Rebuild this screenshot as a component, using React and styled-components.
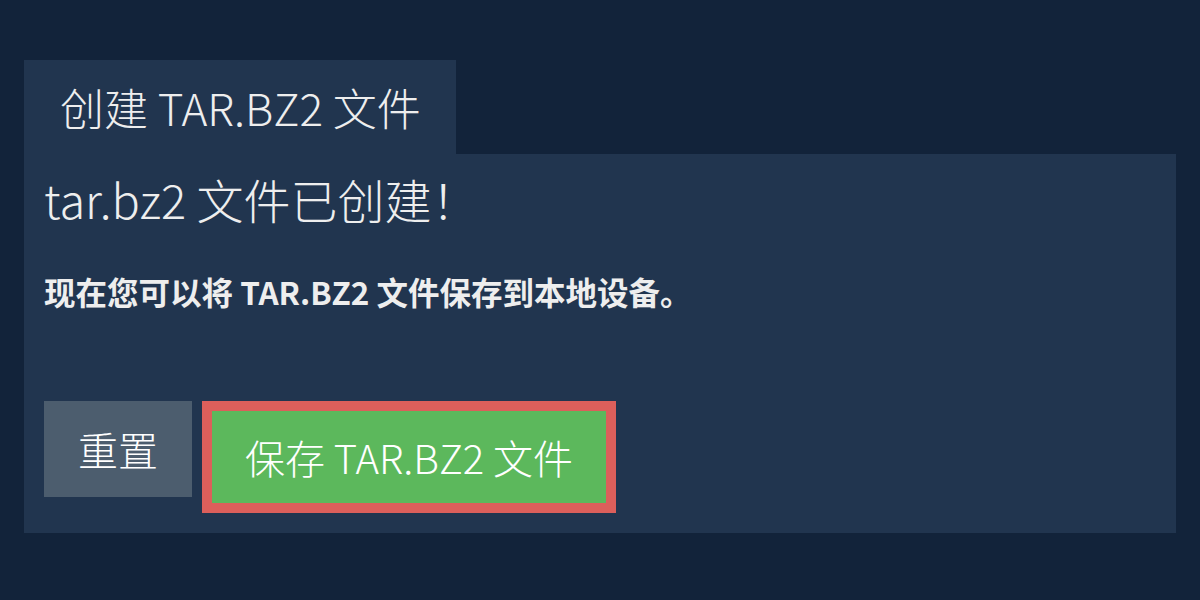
import React from "react";
import styled, { createGlobalStyle } from "styled-components";

const Global = createGlobalStyle`
  html, body { margin: 0; padding: 0; }
  body {
    background: #12233a;
    width: 1200px;
    height: 600px;
    overflow: hidden;
    font-family: "Noto Sans CJK SC", "Noto Sans", sans-serif;
    color: #eeeeee;
  }
`;

const Wrap = styled.div`
  padding: 60px 24px 0 24px;
`;

const Tab = styled.div`
  display: inline-flex;
  align-items: center;
  height: 94px;
  padding: 0 35px 0 36px;
  background: #21354f;
  font-family: "Noto Sans CJK SC Light", "Noto Sans CJK SC", sans-serif;
  font-size: 44px;
  font-weight: 300;
  box-sizing: border-box;
`;

const Panel = styled.div`
  background: #21354f;
  padding: 10px 20px 20px 20px;
  height: 379px;
  box-sizing: border-box;
`;

const Heading = styled.h1`
  margin: 0;
  font-family: "Noto Sans CJK SC Light", "Noto Sans CJK SC", sans-serif;
  font-size: 47px;
  font-weight: 300;
  line-height: 70px;
`;

const Text = styled.p`
  margin: 35px 0 0 0;
  font-size: 31.5px;
  font-weight: 700;
  line-height: 44px;
`;

const Row = styled.div`
  display: flex;
  align-items: flex-start;
  gap: 10px;
  margin-top: 88px;
`;

const Button = styled.button`
  font-family: "Noto Sans CJK SC Light", "Noto Sans CJK SC", sans-serif;
  font-size: 40px;
  font-weight: 300;
  color: #ffffff;
  border: ${(p) => (p.$focused ? "10px solid #dc5f5b" : "none")};
  background: ${(p) => (p.$primary ? "#5cb85c" : "#4c5d6e")};
  height: ${(p) => (p.$focused ? "112px" : "96px")};
  padding: 0 ${(p) => (p.$focused ? "33px" : "34px")};
  box-sizing: border-box;
  cursor: pointer;
  display: inline-flex;
  align-items: center;
`;

export default function App() {
  return (
    <>
      <Global />
      <Wrap>
        <Tab>创建 TAR.BZ2 文件</Tab>
        <Panel>
          <Heading>tar.bz2 文件已创建！</Heading>
          <Text>现在您可以将 TAR.BZ2 文件保存到本地设备。</Text>
          <Row>
            <Button>重置</Button>
            <Button $primary $focused>保存 TAR.BZ2 文件</Button>
          </Row>
        </Panel>
      </Wrap>
    </>
  );
}
